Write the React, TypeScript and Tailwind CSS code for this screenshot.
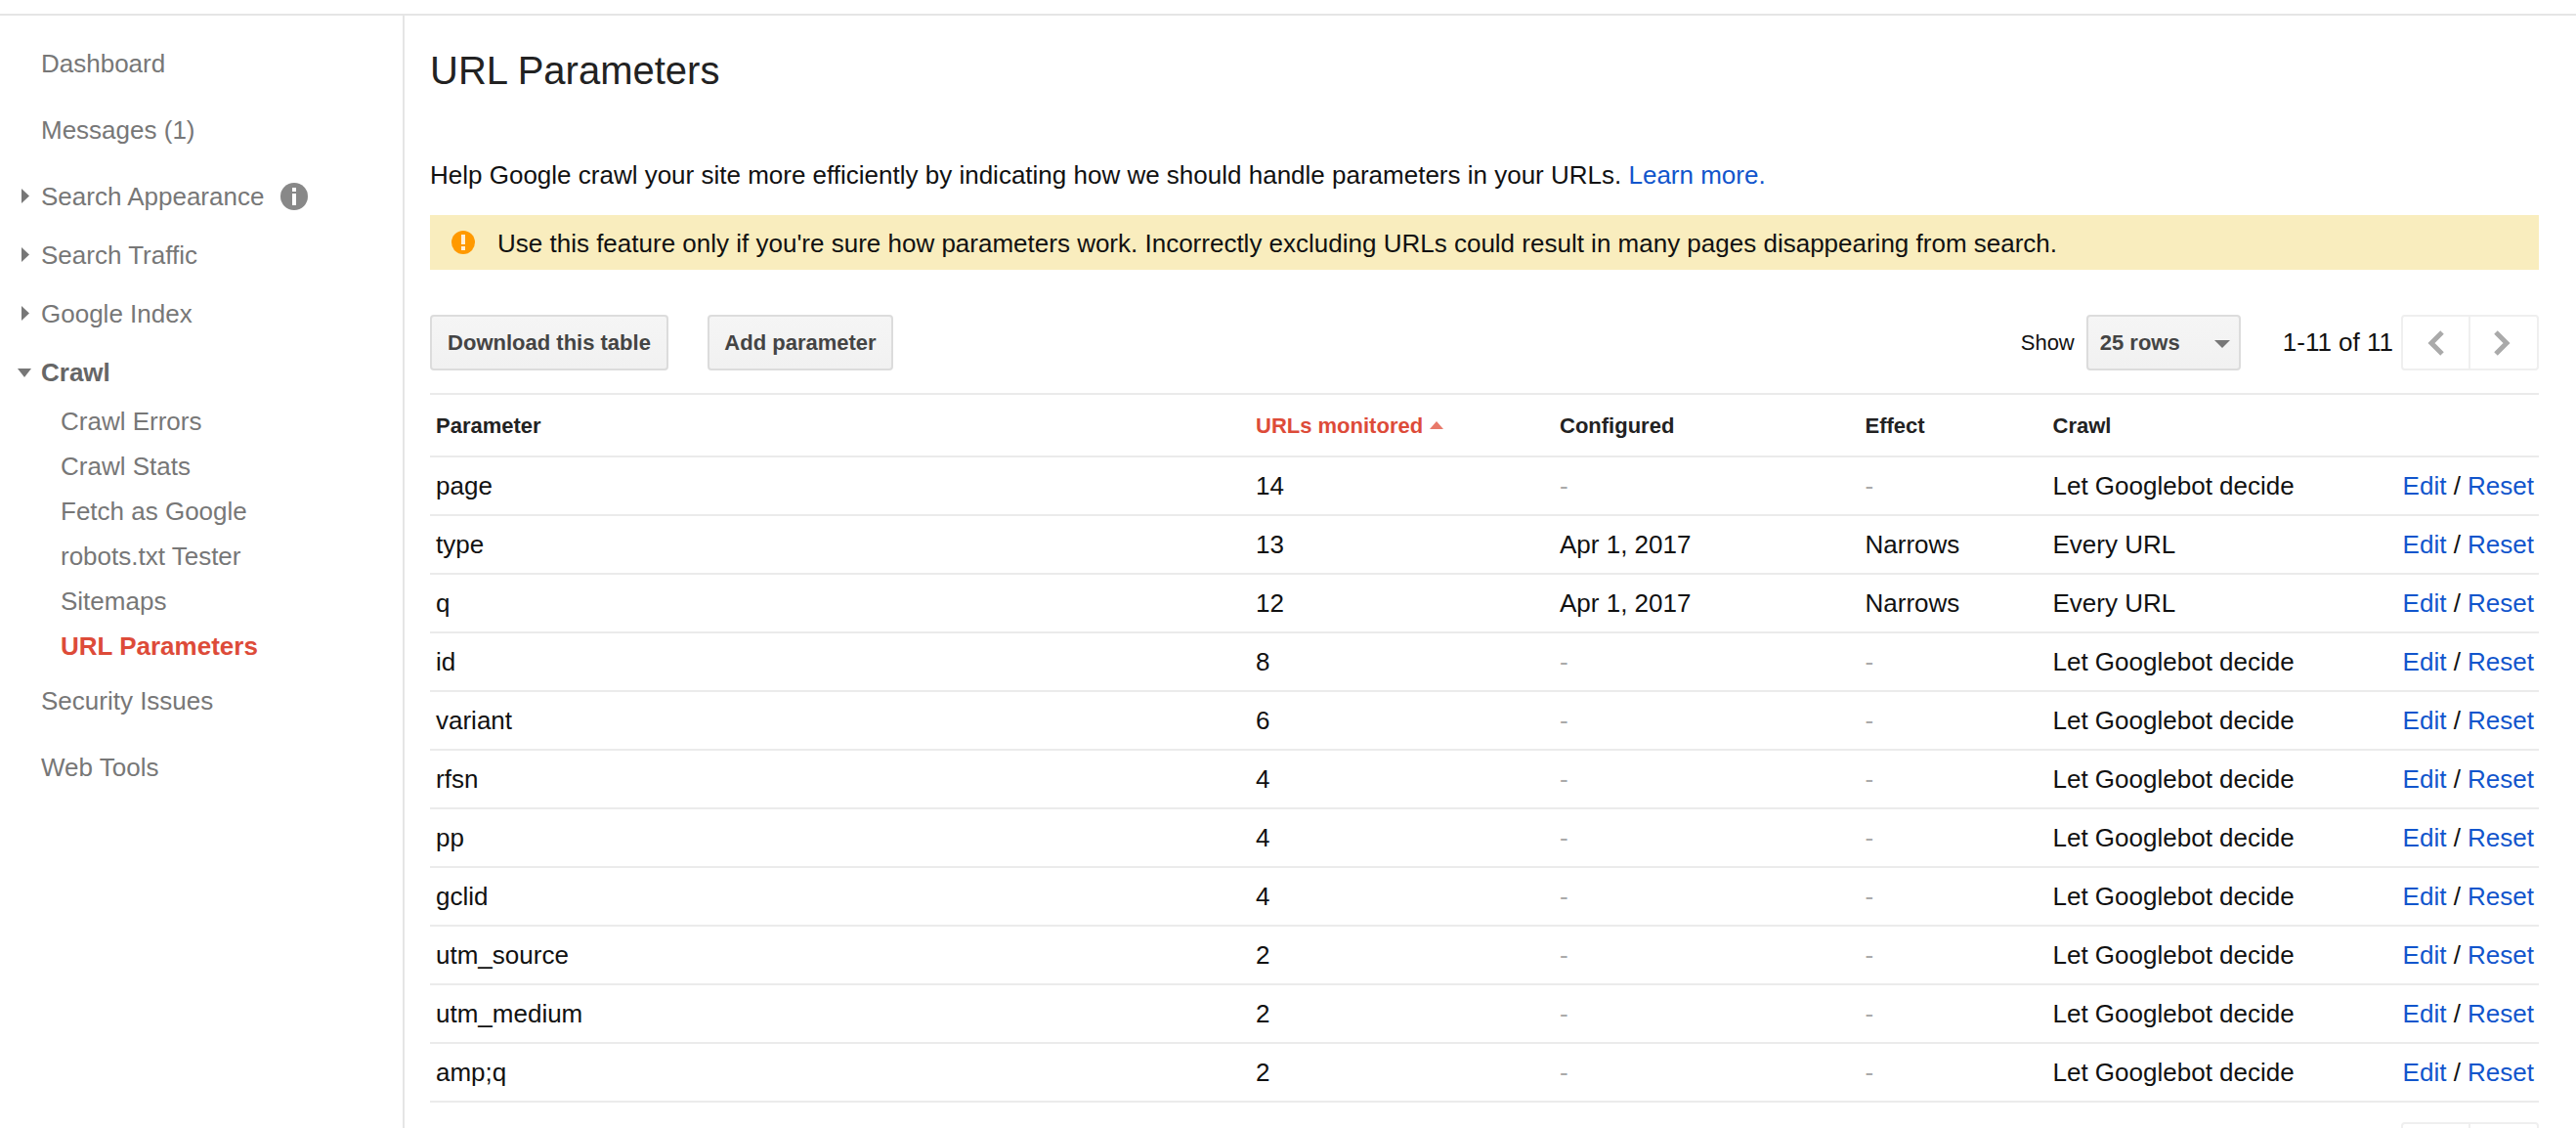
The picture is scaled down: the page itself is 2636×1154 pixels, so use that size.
import React from "react";

const rows = [
  ["page", "14", "-", "-", "Let Googlebot decide"],
  ["type", "13", "Apr 1, 2017", "Narrows", "Every URL"],
  ["q", "12", "Apr 1, 2017", "Narrows", "Every URL"],
  ["id", "8", "-", "-", "Let Googlebot decide"],
  ["variant", "6", "-", "-", "Let Googlebot decide"],
  ["rfsn", "4", "-", "-", "Let Googlebot decide"],
  ["pp", "4", "-", "-", "Let Googlebot decide"],
  ["gclid", "4", "-", "-", "Let Googlebot decide"],
  ["utm_source", "2", "-", "-", "Let Googlebot decide"],
  ["utm_medium", "2", "-", "-", "Let Googlebot decide"],
  ["amp;q", "2", "-", "-", "Let Googlebot decide"],
];

const cols = "grid grid-cols-[839px_311px_312.5px_192px_1fr] items-center border-b-2 border-[#ebebeb]";

function ArrowRight() {
  return (
    <svg width="8" height="15" viewBox="0 0 8 15" className="absolute left-[22px] top-[22px]">
      <path d="M0 0L8 7.5L0 15Z" fill="#777777" />
    </svg>
  );
}

function NavTop({ label, mt, arrow }: { label: string; mt?: string; arrow?: boolean }) {
  return (
    <div className={`relative flex h-[60px] items-center pl-[42px] ${mt ?? ""}`}>
      {arrow && <ArrowRight />}
      <span>{label}</span>
    </div>
  );
}

function Pager() {
  return (
    <div className="flex h-[57px] w-[141px] rounded-[4px] border-2 border-[#efefef]">
      <div className="flex w-[69px] items-center justify-center border-r-2 border-[#efefef]">
        <svg width="18" height="26" viewBox="0 0 18 26" fill="none">
          <path d="M15 2L4 13L15 24" stroke="#aaaaaa" strokeWidth="5" />
        </svg>
      </div>
      <div className="flex flex-1 items-center justify-center pr-[4px]">
        <svg width="18" height="26" viewBox="0 0 18 26" fill="none">
          <path d="M3 2L14 13L3 24" stroke="#aaaaaa" strokeWidth="5" />
        </svg>
      </div>
    </div>
  );
}

export default function App() {
  return (
    <div className="h-[1154px] w-[2636px] overflow-hidden bg-white font-['Liberation_Sans',Arial,sans-serif] text-[26px] text-[#111]">
      <div className="h-[16px] border-b-2 border-[#e5e5e5]" />
      <div className="flex h-[1138px]">
        <aside className="w-[414px] shrink-0 border-r-2 border-[#e5e5e5] pt-[19px] text-[#777]">
          <NavTop label="Dashboard" />
          <NavTop label="Messages (1)" mt="mt-[8px]" />
          <div className="relative mt-[8px] flex h-[60px] items-center pl-[42px]">
            <ArrowRight />
            <span>Search Appearance</span>
            <span className="ml-[17px] flex h-[28px] w-[28px] items-center justify-center rounded-full bg-[#888]">
              <svg width="6" height="18" viewBox="0 0 6 18">
                <rect x="1" y="0" width="4" height="4" fill="#fff" />
                <rect x="1" y="6" width="4" height="12" fill="#fff" />
              </svg>
            </span>
          </div>
          <NavTop label="Search Traffic" arrow />
          <NavTop label="Google Index" arrow />
          <div className="relative flex h-[60px] items-center pl-[42px] font-bold text-[#666]">
            <svg width="14" height="9" viewBox="0 0 14 9" className="absolute left-[18px] top-[26px]">
              <path d="M0 0H14L7 9Z" fill="#777777" />
            </svg>
            <span>Crawl</span>
          </div>
          <div className="-mt-[3px] pl-[62px]">
            <div className="flex h-[46px] items-center">Crawl Errors</div>
            <div className="flex h-[46px] items-center">Crawl Stats</div>
            <div className="flex h-[46px] items-center">Fetch as Google</div>
            <div className="flex h-[46px] items-center">robots.txt Tester</div>
            <div className="flex h-[46px] items-center">Sitemaps</div>
            <div className="flex h-[46px] items-center font-bold text-[#dd4b39]">URL Parameters</div>
          </div>
          <NavTop label="Security Issues" mt="mt-[3px]" />
          <NavTop label="Web Tools" mt="mt-[8px]" />
        </aside>

        <main className="min-w-0 flex-1 pl-[26px] pr-[38px] pt-[26px]">
          <h1 className="flex h-[60px] items-center text-[40px] font-normal text-[#222]">URL Parameters</h1>
          <p className="mt-[57px] flex h-[40px] items-center">
            <span>
              Help Google crawl your site more efficiently by indicating how we should handle parameters in your URLs.{" "}
              <a className="text-[#1155cc]">Learn more.</a>
            </span>
          </p>
          <div className="mt-[21px] flex h-[56px] items-center bg-[#f9edbe] pl-[22px]">
            <span className="flex h-[24px] w-[24px] items-center justify-center rounded-full bg-[#ff9900]">
              <svg width="4" height="16" viewBox="0 0 4 16">
                <rect x="0" y="0" width="4" height="10" fill="#fff" opacity="0.85" />
                <rect x="0" y="12" width="4" height="4" fill="#fff" opacity="0.85" />
              </svg>
            </span>
            <span className="ml-[23px] mt-[3px]">
              Use this feature only if you're sure how parameters work. Incorrectly excluding URLs could result in many pages disappearing from search.
            </span>
          </div>

          <div className="mt-[46px] flex h-[57px] items-stretch text-[22px]">
            <button className="w-[244px] rounded-[4px] border-2 border-[#dcdcdc] bg-gradient-to-b from-[#f5f5f5] to-[#f1f1f1] font-bold text-[#444]">
              Download this table
            </button>
            <button className="ml-[40px] w-[190px] rounded-[4px] border-2 border-[#dcdcdc] bg-gradient-to-b from-[#f5f5f5] to-[#f1f1f1] font-bold text-[#444]">
              Add parameter
            </button>
            <div className="ml-auto flex items-center">
              <span>Show</span>
              <div className="relative ml-[12px] flex h-[57px] w-[158px] items-center rounded-[4px] border-2 border-[#dcdcdc] bg-gradient-to-b from-[#f5f5f5] to-[#f1f1f1] pl-[12px] font-bold text-[#444]">
                25 rows
                <svg width="16" height="8" viewBox="0 0 16 8" className="absolute right-[9px] top-[24px]">
                  <path d="M0 0H16L8 8Z" fill="#777777" />
                </svg>
              </div>
              <span className="ml-[43px] text-[26px]">1-11 of 11</span>
              <div className="ml-[8px]">
                <Pager />
              </div>
            </div>
          </div>

          <div className="mt-[23px] border-t-2 border-[#ebebeb]">
            <div className={`${cols} h-[64px] pl-[6px] text-[22px] font-bold text-[#222]`}>
              <div>Parameter</div>
              <div className="flex items-center text-[#dd4b39]">
                <span>URLs monitored</span>
                <svg width="14" height="8" viewBox="0 0 14 8" className="ml-[7px]">
                  <path d="M7 0L14 8H0Z" fill="#e8796a" />
                </svg>
              </div>
              <div>Configured</div>
              <div>Effect</div>
              <div>Crawl</div>
            </div>
            {rows.map((r) => (
              <div key={r[0]} className={`${cols} h-[60px] pl-[6px]`}>
                <div>{r[0]}</div>
                <div>{r[1]}</div>
                <div className={r[2] === "-" ? "text-[#aaa]" : ""}>{r[2]}</div>
                <div className={r[3] === "-" ? "text-[#aaa]" : ""}>{r[3]}</div>
                <div className="flex items-center justify-between pr-[5px]">
                  <span>{r[4]}</span>
                  <span>
                    <a className="text-[#1155cc]">Edit</a> / <a className="text-[#1155cc]">Reset</a>
                  </span>
                </div>
              </div>
            ))}
          </div>

          <div className="mt-[20px] flex justify-end">
            <Pager />
          </div>
        </main>
      </div>
    </div>
  );
}
